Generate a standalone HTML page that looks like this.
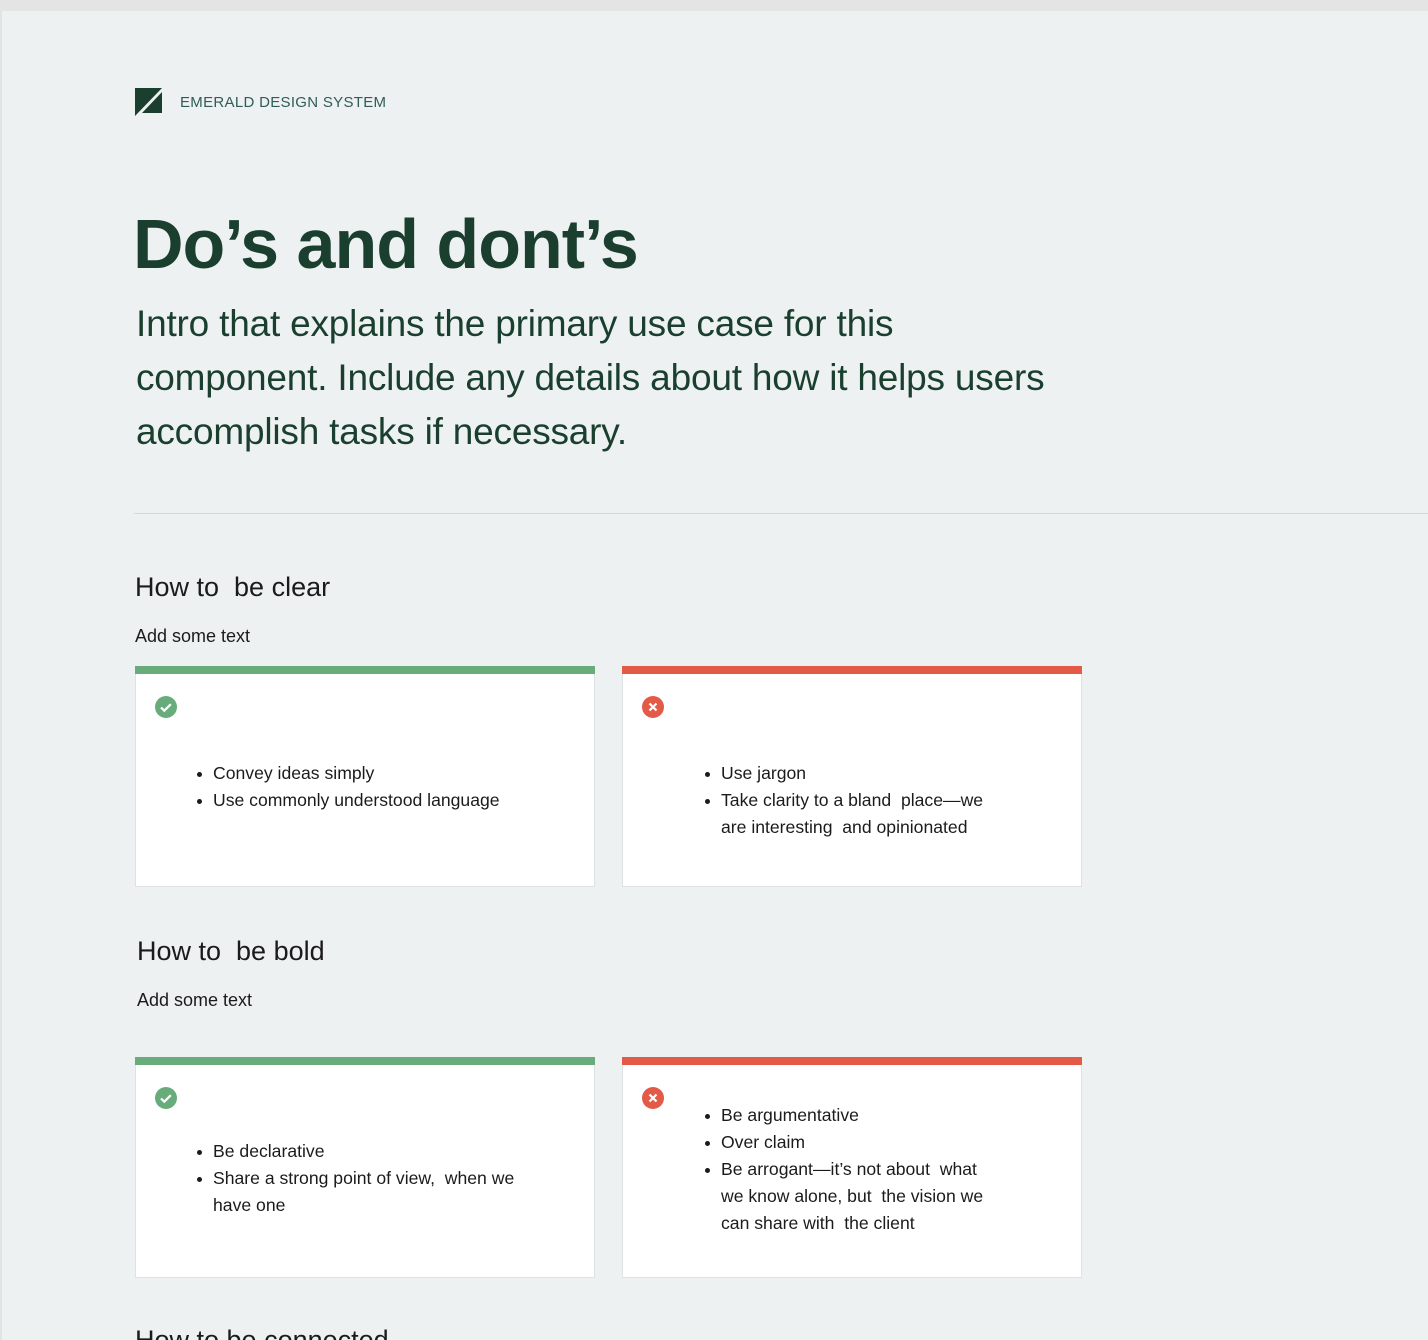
<!DOCTYPE html>
<html><head><style>
*{margin:0;padding:0;box-sizing:border-box}
html,body{width:1428px;height:1340px;overflow:hidden}
body{background:#edf1f1;font-family:"Liberation Sans",sans-serif;position:relative}
.top{position:absolute;left:0;top:0;width:1428px;height:11px;background:#e4e4e4}
.lb{position:absolute;left:0;top:11px;width:2px;height:1329px;background:#e2e4e4}
.abs{position:absolute}
.brand{left:180px;top:94px;font-size:15px;color:#2f5d55;letter-spacing:0.3px}
h1{position:absolute;left:133px;top:204px;font-size:70px;font-weight:bold;color:#1a3f2f;letter-spacing:-1px}
.intro{position:absolute;left:136px;top:297px;width:925px;font-size:37px;line-height:54px;color:#1a3f2f;letter-spacing:-0.2px}
.hr{position:absolute;left:134px;top:513px;width:1294px;height:1px;background:#d3d8d8}
h2{position:absolute;font-size:27px;font-weight:normal;color:#1b1b1b}
.sub{position:absolute;font-size:18px;color:#1b1b1b}
.card{position:absolute;width:460px;background:#fff;border:1px solid #dde2e2;border-top:none}
.bar{position:absolute;left:-1px;top:0;width:460px;height:8px}
.g .bar{background:#67ac7a}.r .bar{background:#e35a47}
.icon{position:absolute;left:19px;top:30px}
ul{position:absolute;left:77px;font-size:17.6px;line-height:27px;color:#1b1b1b;list-style:none}
.r ul{left:98px}
li{position:relative}
li::before{content:"";position:absolute;left:-16px;top:12px;width:5px;height:5px;border-radius:50%;background:#1b1b1b}
</style></head><body>
<div class="top"></div><div class="lb"></div>
<svg class="abs" style="left:135px;top:88px" width="27" height="28" viewBox="0 0 27 28"><polygon points="0,0 27,0 0,28" fill="#1a3f2f"/><polygon points="27,4 27,25 7,25" fill="#1a3f2f"/></svg>
<div class="abs brand">EMERALD DESIGN SYSTEM</div>
<h1>Do’s and dont’s</h1>
<div class="intro">Intro that explains the primary use case for this component. Include any details about how it helps users accomplish tasks if necessary.</div>
<div class="hr"></div>

<h2 style="left:135px;top:572px">How to&nbsp; be clear</h2>
<div class="sub" style="left:135px;top:626px">Add some text</div>
<div class="card g" style="left:135px;top:666px;height:221px"><div class="bar"></div>
<svg class="icon" width="22" height="22" viewBox="0 0 22 22"><circle cx="11" cy="11" r="11" fill="#67ac7a"/><path d="M6 11.5l3.3 3.2 6.5-6.5" stroke="#fff" stroke-width="2.2" fill="none"/></svg>
<ul style="top:94px"><li>Convey ideas simply</li><li>Use commonly understood language</li></ul></div>
<div class="card r" style="left:622px;top:666px;height:221px"><div class="bar"></div>
<svg class="icon" width="22" height="22" viewBox="0 0 22 22"><circle cx="11" cy="11" r="11" fill="#e35a47"/><path d="M7.5 7.5l7 7M14.5 7.5l-7 7" stroke="#fff" stroke-width="2.2"/></svg>
<ul style="top:94px;width:285px"><li>Use jargon</li><li>Take clarity to a bland&nbsp; place—we are interesting&nbsp; and opinionated</li></ul></div>

<h2 style="left:137px;top:936px">How to&nbsp; be bold</h2>
<div class="sub" style="left:137px;top:990px">Add some text</div>
<div class="card g" style="left:135px;top:1057px;height:221px"><div class="bar"></div>
<svg class="icon" width="22" height="22" viewBox="0 0 22 22"><circle cx="11" cy="11" r="11" fill="#67ac7a"/><path d="M6 11.5l3.3 3.2 6.5-6.5" stroke="#fff" stroke-width="2.2" fill="none"/></svg>
<ul style="top:81px;width:330px"><li>Be declarative</li><li>Share a strong point of view,&nbsp; when we have one</li></ul></div>
<div class="card r" style="left:622px;top:1057px;height:221px"><div class="bar"></div>
<svg class="icon" width="22" height="22" viewBox="0 0 22 22"><circle cx="11" cy="11" r="11" fill="#e35a47"/><path d="M7.5 7.5l7 7M14.5 7.5l-7 7" stroke="#fff" stroke-width="2.2"/></svg>
<ul style="top:45px;width:275px"><li>Be argumentative</li><li>Over claim</li><li>Be arrogant—it’s not about&nbsp; what we know alone, but&nbsp; the vision we can share with&nbsp; the client</li></ul></div>

<h2 style="left:135px;top:1325px">How to be connected</h2>
</body></html>
